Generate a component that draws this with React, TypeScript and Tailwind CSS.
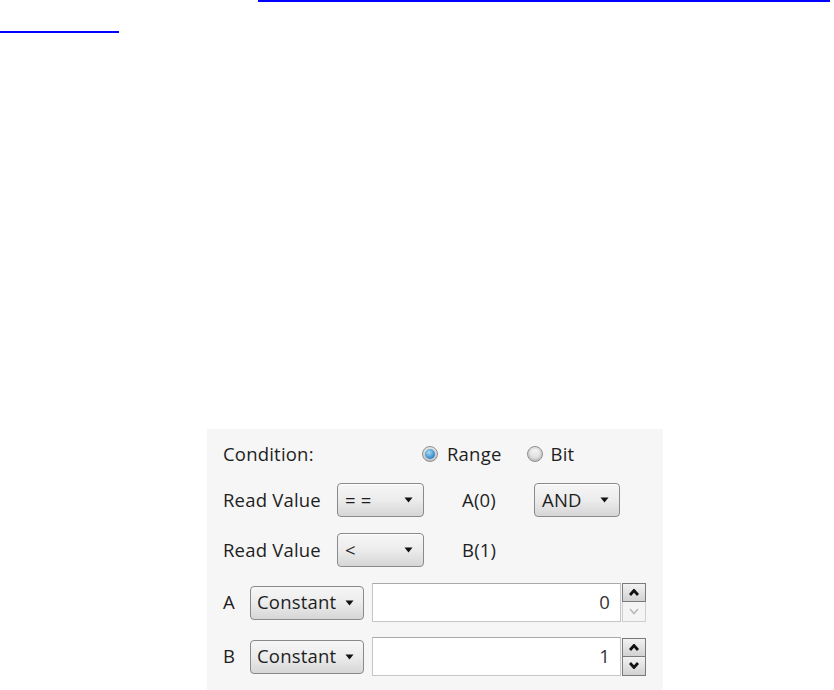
import React from "react";

const font = { fontFamily: '"Open Sans", "Noto Sans", sans-serif' };

function Arrow() {
  return (
    <svg width="9" height="6" viewBox="0 0 9 6" className="shrink-0">
      <path d="M0.5 0.5 L8.5 0.5 L4.5 5.5 Z" fill="#111" />
    </svg>
  );
}

function Select({ value, w }: { value: string; w: string }) {
  return (
    <div
      className={`${w} h-[34px] flex items-center justify-between pl-[7px] pr-[10px] rounded-[4px] border border-[#8a8a8a] bg-gradient-to-b from-[#f6f6f6] via-[#ececec] to-[#d6d6d6] text-[18.5px] tracking-[0.2px] text-[#1e1e1e] shadow-[inset_0_1px_0_#ffffff]`}
    >
      <span className="leading-none">{value}</span>
      <Arrow />
    </div>
  );
}

function Radio({ checked }: { checked: boolean }) {
  return (
    <div className="w-[16px] h-[16px] rounded-full border border-[#8e8e8e] bg-gradient-to-b from-[#e4e4e4] to-[#c2c2c2] flex items-center justify-center">
      {checked ? (
        <div className="w-[10px] h-[10px] rounded-full bg-[radial-gradient(circle_at_40%_35%,#a8dbf8,#2f86c6_70%,#1d5f96)]" />
      ) : (
        <div className="w-[10px] h-[10px] rounded-full bg-gradient-to-b from-[#f6f6f6] to-[#dadada]" />
      )}
    </div>
  );
}

function SpinArrow({ up, disabled }: { up: boolean; disabled?: boolean }) {
  return (
    <svg width="10" height="7" viewBox="0 0 10 7">
      <path
        d={up ? "M1 6 L5 1.5 L9 6" : "M1 1 L5 5.5 L9 1"}
        fill="none"
        stroke={disabled ? "#b8b8b8" : "#111"}
        strokeWidth={disabled ? 1.5 : 2.8}
      />
    </svg>
  );
}

function Spinner({ downDisabled }: { downDisabled?: boolean }) {
  return (
    <div className="w-[24px] flex flex-col">
      <div className="h-[19px] flex items-center justify-center border border-[#7a7a7a] bg-gradient-to-b from-[#f2f2f2] to-[#d2d2d2]">
        <SpinArrow up />
      </div>
      {downDisabled ? (
        <div className="h-[20px] flex items-center justify-center border border-[#cfcfcf] border-t-0 bg-[#f4f4f4]">
          <SpinArrow up={false} disabled />
        </div>
      ) : (
        <div className="h-[19px] flex items-center justify-center border border-[#7a7a7a] border-t-0 bg-gradient-to-b from-[#f2f2f2] to-[#d2d2d2]">
          <SpinArrow up={false} />
        </div>
      )}
    </div>
  );
}

function ValueRow({ label, value, downDisabled }: { label: string; value: string; downDisabled?: boolean }) {
  return (
    <div className="flex items-center h-[39px]">
      <span className="w-[27px] text-[18.5px] leading-none">{label}</span>
      <div className="w-[114px] h-[34px] flex items-center justify-between pl-[6px] pr-[9px] rounded-[4px] border border-[#8a8a8a] bg-gradient-to-b from-[#f6f6f6] via-[#ececec] to-[#d6d6d6] text-[18.5px] tracking-[0.2px] text-[#1e1e1e]">
        <span className="leading-none">Constant</span>
        <Arrow />
      </div>
      <div className="ml-[8px] w-[249px] h-[39px] flex items-center justify-end pr-[10px] bg-white border border-[#c6c6c6] border-t-[#a9a9a9] text-[18.5px] text-[#333]">
        <span className="leading-none">{value}</span>
      </div>
      <div className="ml-[1px]">
        <Spinner downDisabled={downDisabled} />
      </div>
    </div>
  );
}

export default function App() {
  return (
    <div className="w-[834px] h-[690px] bg-white flex flex-col overflow-hidden" style={font}>
      <div className="ml-[258px] w-[572px] h-[2px] bg-[#0000ff]" />
      <div className="mt-[29px] w-[119px] h-[2px] bg-[#0000ff]" />
      <div className="mt-[396px] ml-[207px] w-[456px] flex-1 bg-[#f6f6f6] pl-[16px] pt-[8px] text-[#1e1e1e] tracking-[0.2px]">
        <div className="flex items-center h-[34px]">
          <span className="w-[199px] text-[18.5px] leading-none">Condition:</span>
          <Radio checked />
          <span className="ml-[9px] text-[18.5px] leading-none">Range</span>
          <div className="ml-[26px]">
            <Radio checked={false} />
          </div>
          <span className="ml-[7px] text-[18.5px] leading-none">Bit</span>
        </div>
        <div className="mt-[12px] flex items-center h-[34px]">
          <span className="w-[114px] text-[18.5px] leading-none">Read Value</span>
          <Select value="= =" w="w-[87px]" />
          <span className="ml-[38px] w-[72px] text-[18.5px] leading-none">A(0)</span>
          <Select value="AND" w="w-[86px]" />
        </div>
        <div className="mt-[16px] flex items-center h-[34px]">
          <span className="w-[114px] text-[18.5px] leading-none">Read Value</span>
          <Select value="<" w="w-[87px]" />
          <span className="ml-[38px] w-[72px] text-[18.5px] leading-none">B(1)</span>
        </div>
        <div className="mt-[16px]">
          <ValueRow label="A" value="0" downDisabled />
        </div>
        <div className="mt-[15px]">
          <ValueRow label="B" value="1" />
        </div>
      </div>
    </div>
  );
}
